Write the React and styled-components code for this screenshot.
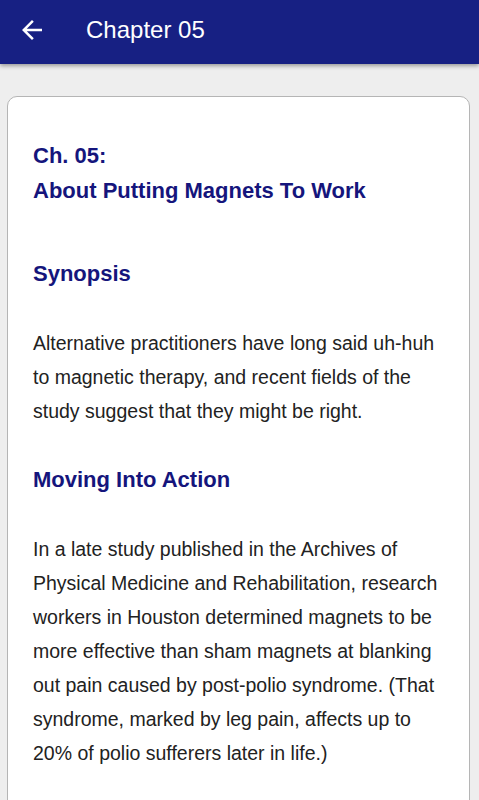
import React from "react";
import styled, { createGlobalStyle } from "styled-components";

const Global = createGlobalStyle`
  html, body { margin: 0; padding: 0; background: #eeeeee; }
  body { font-family: "Liberation Sans", Arial, sans-serif; }
  * { box-sizing: border-box; }
`;

const Page = styled.div`
  background: #eeeeee;
`;

const Toolbar = styled.header`
  height: 64px;
  background: #172083;
  display: flex;
  align-items: center;
  padding-left: 22px;
  padding-bottom: 4px;
  box-shadow: 0 2px 4px rgba(0, 0, 0, 0.35);
  position: relative;
  z-index: 1;
`;

const BackButton = styled.button`
  width: 20px;
  height: 20px;
  padding: 0;
  border: none;
  background: transparent;
  display: flex;
  align-items: center;
  justify-content: center;
  cursor: pointer;
`;

const ToolbarTitle = styled.h1`
  margin: 0 0 0 44px;
  font-size: 24px;
  font-weight: 400;
  color: #ffffff;
  line-height: 1;
`;

const Card = styled.article`
  margin: 32px 9px 0 7px;
  background: #ffffff;
  border: 1px solid #b5b5b5;
  border-radius: 10px;
  padding: 41px 25px 40px 25px;
`;

const Title = styled.h2`
  margin: 0 0 48px;
  font-size: 22px;
  line-height: 35px;
  font-weight: 700;
  color: #15157c;
`;

const SectionHeading = styled.h3`
  margin: 0 0 35px;
  font-size: 22px;
  line-height: 35px;
  font-weight: 700;
  color: #15157c;
`;

const Paragraph = styled.p`
  margin: 0 0 34px;
  font-size: 19.5px;
  line-height: 34px;
  color: #222222;
`;

const ArrowBack = () => (
  <svg width="20" height="20" viewBox="4 4 16 16" aria-hidden="true">
    <path
      d="M20 11H7.83l5.59-5.59L12 4l-8 8 8 8 1.41-1.41L7.83 13H20v-2z"
      fill="#ffffff"
    />
  </svg>
);

export default function App() {
  return (
    <Page>
      <Global />
      <Toolbar>
        <BackButton aria-label="Back">
          <ArrowBack />
        </BackButton>
        <ToolbarTitle>Chapter 05</ToolbarTitle>
      </Toolbar>
      <Card>
        <Title>
          Ch. 05:
          <br />
          About Putting Magnets To Work
        </Title>
        <SectionHeading>Synopsis</SectionHeading>
        <Paragraph>
          Alternative practitioners have long said uh-huh to magnetic therapy,
          and recent fields of the study suggest that they might be right.
        </Paragraph>
        <SectionHeading>Moving Into Action</SectionHeading>
        <Paragraph>
          In a late study published in the Archives of Physical Medicine and
          Rehabilitation, research workers in Houston determined magnets to be
          more effective than sham magnets at blanking out pain caused by
          post-polio syndrome. (That syndrome, marked by leg pain, affects up to
          20% of polio sufferers later in life.)
        </Paragraph>
      </Card>
    </Page>
  );
}
